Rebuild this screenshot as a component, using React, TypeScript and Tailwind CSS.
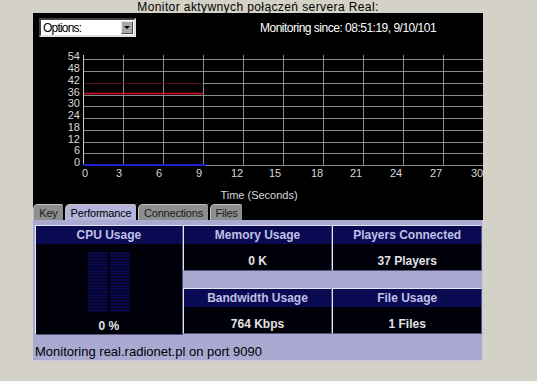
import React from "react";

const yLabels = ["54", "48", "42", "36", "30", "24", "18", "12", "6", "0"];
const gridY = [22, 34, 46, 58, 69, 81, 93, 105, 116, 128];
const xLabels = ["0", "3", "6", "9", "12", "15", "18", "21", "24", "27", "30"];
const xLabelPos = [52, 86, 126, 166, 204, 242, 284, 323, 363, 403, 444];

const Chart = () => (
  <svg width={450} height={166} className="block" style={{ fontFamily: '"Liberation Sans", Arial, sans-serif' }}>
    {Array.from({ length: 11 }).map((_, k) => (
      <line key={k} x1={50.5 + 40 * k} x2={50.5 + 40 * k} y1={18} y2={128} stroke="#8a8a8a" strokeWidth={1} />
    ))}
    {gridY.map((y) => (
      <line key={y} x1={50} x2={450} y1={y + 0.5} y2={y + 0.5} stroke="#8a8a8a" strokeWidth={1} />
    ))}
    <line x1={50.5} x2={50.5} y1={18} y2={129} stroke="#c8c8c8" strokeWidth={1} />
    <line x1={51} x2={170} y1={46.5} y2={46.5} stroke="#5a0a14" strokeWidth={1} />
    <line x1={51} x2={170} y1={56.5} y2={56.5} stroke="#d8102a" strokeWidth={1.5} />
    <line x1={50} x2={173} y1={128} y2={128} stroke="#2020d0" strokeWidth={2} />
    {yLabels.map((l, i) => (
      <text key={l} x={47} y={gridY[i] + 1} textAnchor="end" fontSize={11} fill="#d8d8d8">
        {l}
      </text>
    ))}
    {xLabels.map((l, i) => (
      <text key={l} x={xLabelPos[i]} y={140} textAnchor="middle" fontSize={11} fill="#d8d8d8">
        {l}
      </text>
    ))}
    <text x={226} y={162} textAnchor="middle" fontSize={11} fill="#d8d8d8">
      Time (Seconds)
    </text>
  </svg>
);

const Tab = ({ label, active, w }: { label: string; active?: boolean; w: string }) => (
  <div
    className={`${w} h-[16px] mt-[1px] flex items-center justify-center rounded-tl-[5px] rounded-tr-[2px] border-t border-l border-[#c0c0c0] text-[11px] tracking-[-0.2px] leading-[14px] ${
      active ? "bg-[#b4b4dc] text-black" : "bg-[#8e8e8e] text-[#1a1a1a]"
    }`}
  >
    {label}
  </div>
);

const Card = ({ title, value, className }: { title: string; value: string; className?: string }) => (
  <div className={`flex flex-col border-t border-l border-t-[#e4e4f4] border-l-[#e4e4f4] border-b border-r border-b-[#55557a] border-r-[#55557a] bg-[#00000a] ${className ?? ""}`}>
    <div className="h-[18px] bg-[#0a0a52] text-[#c0c0e6] font-bold text-[12px] leading-[18px] text-center">{title}</div>
    <div className="pt-[10px] text-[#e2e2e2] font-bold text-[12px] leading-[14px] text-center">{value}</div>
  </div>
);

export default function App() {
  return (
    <div
      className="w-[537px] h-[381px] bg-[#d4d1c6] overflow-hidden"
      style={{ fontFamily: '"Liberation Sans", Arial, sans-serif' }}
    >
      <div className="ml-[33px] w-[450px]">
        <div className="h-[13px] text-[12px] leading-[13px] tracking-[0.4px] text-center text-black pt-[1px]">
          Monitor aktywnych połączeń servera Real:
        </div>

        <div className="bg-black h-[207px] flex flex-col">
          <div className="h-[24px] pt-[5px] flex items-start">
            <div className="ml-[6px] w-[97px] h-[19px] bg-white border-2 border-t-[#404040] border-l-[#404040] border-b-[#e0e0e0] border-r-[#e0e0e0] flex items-center">
              <span className="ml-[2px] flex-1 text-[12px] tracking-[-0.8px] leading-[14px] text-black">Options:</span>
              <div className="w-[12px] h-[13px] mr-[1px] bg-[#a8a8a8] border border-t-[#e8e8e8] border-l-[#e8e8e8] border-b-[#505050] border-r-[#505050] flex items-center justify-center">
                <div className="w-0 h-0 border-l-[3px] border-r-[3px] border-t-[3px] border-l-transparent border-r-transparent border-t-black" />
              </div>
            </div>
            <div className="ml-[124px] mt-[3px] text-white text-[12px] tracking-[-0.5px] leading-[14px]">
              Monitoring since: 08:51:19, 9/10/101
            </div>
          </div>
          <Chart />
          <div className="h-[17px] flex items-end gap-[2px]">
            <Tab label="Key" w="w-[30px]" />
            <Tab label="Performance" w="w-[71px]" active />
            <Tab label="Connections" w="w-[70px]" />
            <Tab label="Files" w="w-[32px]" />
          </div>
        </div>

        <div className="h-[141px] bg-[#a9a9d1] border-r border-b border-[#c8c8e2] pt-[5px] pl-[2px] flex flex-col">
          <div className="flex">
            <div className="w-[148px] h-[110px] flex flex-col border-t border-l border-t-[#e4e4f4] border-l-[#e4e4f4] border-b border-r border-b-[#55557a] border-r-[#55557a] bg-[#00000a]">
              <div className="h-[18px] bg-[#0a0a52] text-[#c0c0e6] font-bold text-[12px] leading-[18px] text-center">CPU Usage</div>
              <div className="mt-[8px] flex justify-center gap-[2px]">
                {[0, 1].map((c) => (
                  <div key={c} className="w-[20px] flex flex-col">
                    {Array.from({ length: 20 }).map((_, r) => (
                      <div key={r} className="h-[3px] border-b border-[#02021c] bg-[#08084a]" />
                    ))}
                  </div>
                ))}
              </div>
              <div className="mt-[7px] text-[#e2e2e2] font-bold text-[12px] leading-[14px] text-center">0 %</div>
            </div>
            <div className="w-[300px] flex flex-col">
              <div className="grid grid-cols-2 h-[46px]">
                <Card title="Memory Usage" value="0 K" />
                <Card title="Players Connected" value="37 Players" />
              </div>
              <div className="h-[17px]" />
              <div className="grid grid-cols-2 h-[46px]">
                <Card title="Bandwidth Usage" value="764 Kbps" />
                <Card title="File Usage" value="1 Files" />
              </div>
            </div>
          </div>
          <div className="mt-[10px] text-[13px] leading-[14px] text-black">Monitoring real.radionet.pl on port 9090</div>
        </div>
      </div>
    </div>
  );
}
